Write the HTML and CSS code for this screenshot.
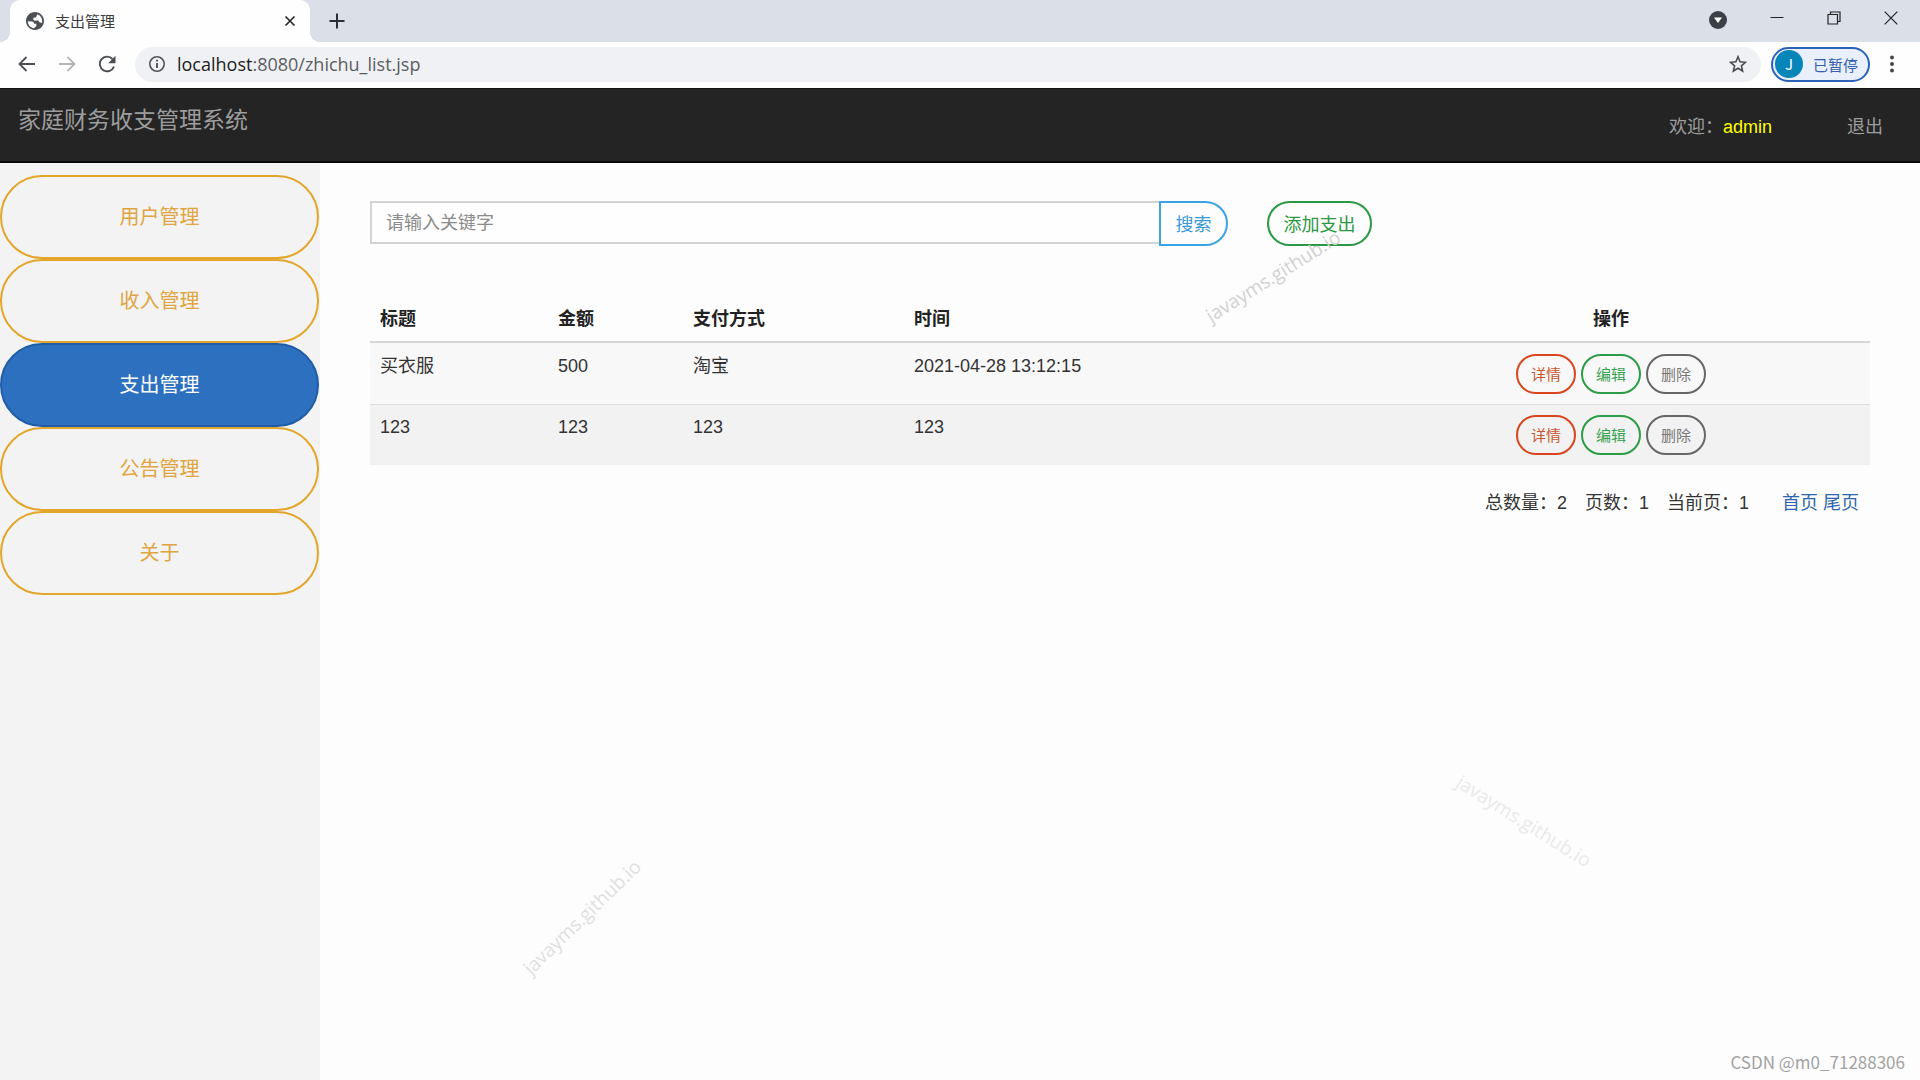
FILE: index.html
```html
<!DOCTYPE html>
<html lang="zh-CN">
<head>
<meta charset="utf-8">
<meta name="viewport" content="width=device-width, initial-scale=1">
<title>支出管理</title>
<link rel="stylesheet" href="styles.css">
</head>
<body>
<div class="tabstrip">
  <div class="tab">
    <svg class="tab-icon" viewBox="2 2 20 20" width="18" height="18" aria-hidden="true"><path fill="#4c5055" d="M12 2C6.480 2 2 6.480 2 12s4.480 10 10 10 10-4.480 10-10S17.520 2 12 2zM4 12.200L8.500 12.500C10 12.600 11 13.500 11 15h2.500v2.500L11 20C7 19.500 4 16.300 4 12.200zM14.500 4.400C17.800 5.500 20 8.500 20 12c0 .8-.1 1.500-.3 2.200L17 13.500l-1.500-2-4 .2-1.700-1.700 1-1.800 2.200-.2z"/></svg>
    <span class="tab-title">支出管理</span>
    <button class="icon-btn" type="button" aria-label="关闭标签页"><svg viewBox="0 0 12 12" width="12" height="12"><path d="M1.500 1.500l9 9M10.500 1.500l-9 9" stroke="#222" stroke-width="1.600"/></svg></button>
  </div>
  <button class="icon-btn new-tab" type="button" aria-label="新标签页"><svg viewBox="0 0 16 16" width="16" height="16"><path d="M8 .5v15M.5 8h15" stroke="#2c2f33" stroke-width="2"/></svg></button>
  <div class="window-controls">
    <button class="icon-btn tab-search" type="button" aria-label="搜索标签页"><svg viewBox="0 0 18 18" width="18" height="18"><circle cx="9" cy="9" r="9" fill="#3c4046"/><path d="M5 6.500h8L9 12z" fill="#fff"/></svg></button>
    <button class="icon-btn" type="button" aria-label="最小化"><svg viewBox="0 0 14 14" width="14" height="14"><path d="M.5 6.500h13" stroke="#222" stroke-width="1"/></svg></button>
    <button class="icon-btn" type="button" aria-label="还原"><svg viewBox="0 0 14 14" width="14" height="14" fill="none" stroke="#222" stroke-width="1.200"><path d="M1 3.500h9.500V13H1zM3.500 3.500V1H13v9.500h-2.500"/></svg></button>
    <button class="icon-btn" type="button" aria-label="关闭"><svg viewBox="0 0 14 14" width="14" height="14"><path d="M.7.7l12.600 12.600M13.300.7.700 13.300" stroke="#222" stroke-width="1.200"/></svg></button>
  </div>
</div>
<div class="toolbar">
  <div class="nav-buttons">
    <button class="icon-btn" type="button" aria-label="后退"><svg viewBox="0 0 18 16" width="18" height="16" fill="none" stroke="#4a4d51" stroke-width="1.800"><path d="M17 8H2M8.500 1 1.500 8l7 7"/></svg></button>
    <button class="icon-btn" type="button" aria-label="前进"><svg viewBox="0 0 18 16" width="18" height="16" fill="none" stroke="#b4b6b9" stroke-width="1.800"><path d="M1 8h15M9.500 1l7 7-7 7"/></svg></button>
    <button class="icon-btn" type="button" aria-label="刷新"><svg viewBox="0 0 18 18" width="18" height="18"><path d="M14.500 4A7.300 7.300 0 1 0 16 11.500" fill="none" stroke="#4a4d51" stroke-width="1.900"/><path d="M17.500.8v7.400h-7.300z" fill="#4a4d51"/></svg></button>
  </div>
  <div class="address">
    <svg viewBox="0 0 16 16" width="16" height="16" aria-hidden="true"><circle cx="8" cy="8" r="7.200" fill="none" stroke="#505459" stroke-width="1.600"/><path d="M8 3.700v1.800M8 7v5" stroke="#505459" stroke-width="1.900"/></svg>
    <span class="url"><span class="url-host">localhost</span>:8080/zhichu_list.jsp</span>
    <button class="icon-btn" type="button" aria-label="收藏"><svg viewBox="0 0 18 18" width="18" height="18"><path d="M9 1.800l2.100 5 5.300.5-4 3.500 1.200 5.200L9 13.200 4.400 16l1.200-5.200-4-3.500 5.300-.5z" fill="none" stroke="#4a4d51" stroke-width="1.600"/></svg></button>
  </div>
  <button class="profile" type="button"><span class="avatar">J</span><span>已暂停</span></button>
  <button class="icon-btn menu" type="button" aria-label="菜单"><svg viewBox="0 0 4 18" width="4" height="18" fill="#44474b"><circle cx="2" cy="2.500" r="2"/><circle cx="2" cy="9" r="2"/><circle cx="2" cy="15.500" r="2"/></svg></button>
</div>
<header class="navbar">
  <a class="brand" href="#">家庭财务收支管理系统</a>
  <div class="account"><span>欢迎：<span class="user">admin</span></span><a href="#">退出</a></div>
</header>
<div class="layout">
  <nav class="sidebar">
    <a class="side-link" href="#">用户管理</a>
    <a class="side-link" href="#">收入管理</a>
    <a class="side-link active" href="#">支出管理</a>
    <a class="side-link" href="#">公告管理</a>
    <a class="side-link" href="#">关于</a>
  </nav>
  <main class="content">
    <form class="search">
      <input class="search-input" type="text" aria-label="关键字" placeholder="请输入关键字">
      <button class="btn search-btn" type="button">搜索</button>
      <button class="btn add-btn" type="button">添加支出</button>
    </form>
    <table class="records">
      <colgroup><col class="col-title"><col class="col-amount"><col class="col-method"><col class="col-time"><col></colgroup>
      <thead><tr><th>标题</th><th>金额</th><th>支付方式</th><th>时间</th><th class="ops">操作</th></tr></thead>
      <tbody>
        <tr><td>买衣服</td><td>500</td><td>淘宝</td><td>2021-04-28 13:12:15</td><td><div class="actions"><button class="btn small detail" type="button">详情</button><button class="btn small edit" type="button">编辑</button><button class="btn small delete" type="button">删除</button></div></td></tr>
        <tr><td>123</td><td>123</td><td>123</td><td>123</td><td><div class="actions"><button class="btn small detail" type="button">详情</button><button class="btn small edit" type="button">编辑</button><button class="btn small delete" type="button">删除</button></div></td></tr>
      </tbody>
    </table>
    <div class="pager">
      <span>总数量：2</span><span>页数：1</span><span>当前页：1</span>
      <span class="pager-links"><a href="#">首页</a> <a href="#">尾页</a></span>
    </div>
  </main>
</div>
<div class="mark mark-top">javayms.github.io</div>
<div class="mark mark-left">javayms.github.io</div>
<div class="mark mark-right">javayms.github.io</div>
<div class="credit">CSDN @m0_71288306</div>
</body>
</html>
```
FILE: styles.css
```css
* { box-sizing: border-box; }

body {
  margin: 0;
  min-height: 100vh;
  display: flex;
  flex-direction: column;
  position: relative;
  overflow-x: hidden;
  background: #fdfdfd;
  color: #333;
  font-family: "Liberation Sans", "Noto Sans CJK SC", sans-serif;
  font-size: 18px;
  line-height: 24px;
}

a { color: inherit; text-decoration: none; }
button { font-family: inherit; cursor: pointer; }
svg { display: block; flex: none; }

.icon-btn { padding: 0; border: 0; background: none; }

/* Browser tabs */
.tabstrip {
  display: flex;
  height: 42px;
  padding-left: 10px;
  background: #dadfe8;
}
.tab {
  position: relative;
  display: flex;
  align-items: center;
  width: 300px;
  padding: 0 14px 0 16px;
  border-radius: 10px 10px 0 0;
  background: #fefefe;
}
.tab::before,
.tab::after {
  content: "";
  position: absolute;
  bottom: 0;
  width: 10px;
  height: 10px;
}
.tab::before { left: -10px; background: radial-gradient(circle at 0 0, transparent 10px, #fefefe 10px); }
.tab::after { right: -10px; background: radial-gradient(circle at 100% 0, transparent 10px, #fefefe 10px); }
.tab-title {
  flex: 1;
  padding: 2px 0 0 11px;
  color: #3c3c3c;
  font-size: 15px;
}
.new-tab { margin-left: 19px; }
.window-controls {
  display: flex;
  align-items: center;
  gap: 43px;
  height: 36px;
  margin-left: auto;
  padding-right: 22px;
}
.tab-search { padding-top: 4px; }

/* Browser toolbar */
.toolbar {
  display: flex;
  align-items: center;
  height: 46px;
  padding: 0 26px 2px 18px;
  background: #fefefe;
}
.nav-buttons {
  display: flex;
  align-items: center;
  gap: 22px;
  margin-right: 19px;
}
.address {
  flex: 1;
  display: flex;
  align-items: center;
  height: 35px;
  padding: 0 14px;
  border-radius: 18px;
  background: #f0f1f4;
}
.url {
  flex: 1;
  padding-left: 12px;
  color: #5b5e62;
  font-family: "Open Sans", sans-serif;
  font-size: 18px;
}
.url-host { color: #1c1c1c; }
.profile {
  display: flex;
  align-items: center;
  gap: 10px;
  width: 99px;
  height: 35px;
  margin-left: 10px;
  padding: 0 2px;
  border: 2px solid #2b62b8;
  border-radius: 18px;
  background: #e9effb;
  color: #3560ad;
  font-size: 15px;
  white-space: nowrap;
}
.avatar {
  width: 28px;
  height: 28px;
  border-radius: 50%;
  background: #0585b8;
  color: #fff;
  font-family: "Noto Sans CJK SC", sans-serif;
  font-size: 15px;
  line-height: 28px;
}
.menu { margin-left: 20px; }

/* Application header */
.navbar {
  display: flex;
  justify-content: space-between;
  height: 75px;
  padding: 19px 37px 0 18px;
  border-top: 1px solid #111;
  border-bottom: 2px solid #090909;
  background: #242424;
  color: #9d9d9d;
}
.brand { font-size: 23px; }
.account {
  display: flex;
  gap: 75px;
  padding-top: 7px;
}
.user { color: #ff0; }

.layout { flex: 1; display: flex; }

.sidebar {
  flex: none;
  width: 320px;
  padding: 12px 1px 0 0;
  background: #f3f3f3;
}
.side-link {
  display: block;
  height: 84px;
  border: 2px solid #e4a52b;
  border-radius: 42px;
  color: #e0a540;
  font-size: 20px;
  line-height: 80px;
  text-align: center;
}
.side-link.active {
  border-color: #1f5da8;
  background: #2e70c0;
  color: #fff;
}

.content { flex: 1; padding: 38px 50px 0; }

.btn {
  padding: 0 0 2px;
  border: 2px solid;
  background: transparent;
  font-size: 18px;
  white-space: nowrap;
}
.search { display: flex; align-items: flex-start; }
.search-input {
  width: 789px;
  height: 43px;
  padding: 2px 14px 0;
  border: 2px solid #d3d3d3;
  border-right: 0;
  background: #fefefe;
  font: inherit;
}
.search-input::placeholder { color: #8b8b8b; }
.search-btn {
  width: 69px;
  height: 45px;
  border-color: #38a3e6;
  border-radius: 0 23px 23px 0;
  color: #3c9ad6;
}
.add-btn {
  width: 105px;
  height: 45px;
  margin-left: 39px;
  border-color: #2c9843;
  border-radius: 23px;
  color: #2c9843;
}

.records {
  width: 100%;
  margin-top: 50px;
  border-collapse: separate;
  border-spacing: 0;
  table-layout: fixed;
}
.col-title { width: 178px; }
.col-amount { width: 135px; }
.col-method { width: 221px; }
.col-time { width: 448px; }
.records th {
  padding: 11px 10px 10px;
  border-bottom: 2px solid #d6d6d6;
  color: #222;
  text-align: left;
}
.records th.ops { text-align: center; }
.records td {
  height: 61px;
  padding: 11px 10px 9px;
  background: #f8f8f8;
  vertical-align: top;
}
.records tr + tr td {
  padding-top: 10px;
  border-top: 1px solid #ddd;
  background: #f2f2f2;
}
.actions {
  display: flex;
  justify-content: center;
  gap: 5px;
}
.small {
  width: 60px;
  height: 40px;
  border-radius: 20px;
  font-size: 15px;
}
.detail { border-color: #d9461d; color: #c9562f; }
.edit { border-color: #2c9c45; color: #35a04e; }
.delete { border-color: #676767; color: #777; }

.pager {
  display: flex;
  justify-content: flex-end;
  gap: 18px;
  margin-top: 26px;
  padding-right: 11px;
}
.pager-links { padding-left: 15px; color: #2c66ae; }

/* Watermarks laid over the page */
.mark {
  position: absolute;
  width: 160px;
  font-family: "Open Sans", sans-serif;
  font-size: 19px;
  text-align: center;
  pointer-events: none;
}
.mark-top { left: 1193px; top: 264px; color: #d2d2d2; transform: rotate(-32deg); }
.mark-left { left: 502px; top: 905px; color: #e0e0e0; transform: rotate(-44deg); }
.mark-right { left: 1444px; top: 809px; color: #eaeaea; transform: rotate(32deg); }
.credit {
  position: absolute;
  right: 15px;
  bottom: 6px;
  color: #a2a2a2;
  font-family: "Noto Sans CJK SC", sans-serif;
  font-size: 17px;
}
```
